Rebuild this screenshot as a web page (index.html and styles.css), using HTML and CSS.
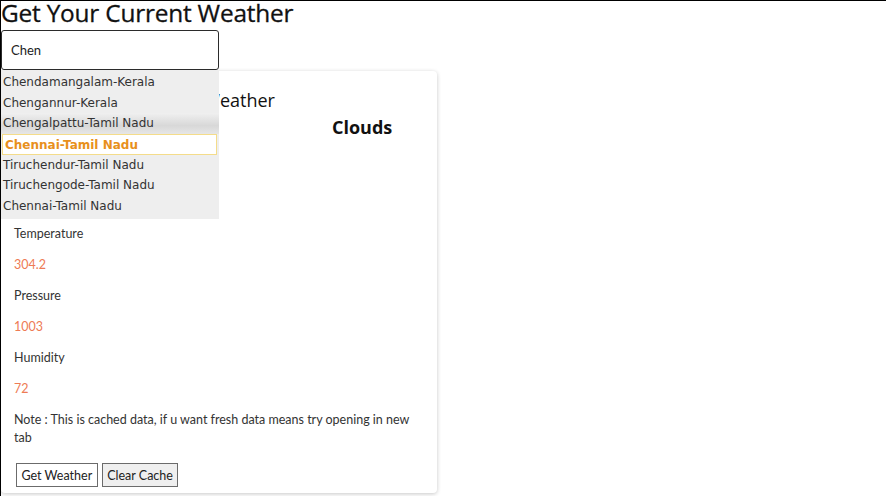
FILE: index.html
```html
<!DOCTYPE html>
<html>
<head>
<meta charset="utf-8">
<link rel="stylesheet" href="styles.css">
</head>
<body>
<div class="page">
  <h1 class="title">Get Your Current Weather</h1>
  <div class="search">
    <input class="search-input" type="text" value="Chen">
    <ul class="suggest">
      <li class="item">Chendamangalam-Kerala</li>
      <li class="item">Chengannur-Kerala</li>
      <li class="item item-hover">Chengalpattu-Tamil Nadu</li>
      <li class="item item-active">Chennai-Tamil Nadu</li>
      <li class="item">Tiruchendur-Tamil Nadu</li>
      <li class="item">Tiruchengode-Tamil Nadu</li>
      <li class="item">Chennai-Tamil Nadu</li>
    </ul>
  </div>
  <div class="card">
    <h2 class="card-title">Current Weather</h2>
    <div class="cond">Clouds</div>
    <div class="icon-space"></div>
    <p class="label">Temperature</p>
    <p class="value">304.2</p>
    <p class="label">Pressure</p>
    <p class="value">1003</p>
    <p class="label">Humidity</p>
    <p class="value">72</p>
    <p class="label">Note : This is cached data, if u want fresh data means try opening in new tab</p>
    <div class="actions">
      <button class="btn btn-light">Get Weather</button>
      <button class="btn btn-gray">Clear Cache</button>
    </div>
  </div>
</div>
</body>
</html>
```
FILE: styles.css
```css
html, body {
  margin: 0;
  padding: 0;
  background: #fff;
}
.page {
  box-sizing: border-box;
  height: 496px;
  border-top: 1px solid #000;
  border-left: 1px solid #000;
  font-family: Lato, "Open Sans", sans-serif;
  color: #222;
  position: relative;
}
.title {
  margin: 0 0 5px 0;
  font-family: "Open Sans", sans-serif;
  font-weight: 400;
  font-size: 24.4px;
  line-height: 24px;
  color: #111;
  letter-spacing: -0.2px;
  -webkit-text-stroke: 0.3px #111;
}
.search {
  position: relative;
  width: 218px;
  z-index: 2;
}
.search-input {
  display: block;
  box-sizing: border-box;
  width: 218px;
  height: 40px;
  margin: 0;
  border: 1.5px solid #2b2b2b;
  border-radius: 3px;
  padding: 0 9px;
  font-family: Lato, sans-serif;
  font-size: 13px;
  color: #222;
  outline: none;
}
.suggest {
  position: absolute;
  top: 40px;
  left: 0;
  width: 218px;
  margin: 0;
  padding: 2px 0 2px 0;
  list-style: none;
  background: #eeeeee;
  box-sizing: border-box;
}
.item {
  font-family: "DejaVu Sans", Verdana, sans-serif;
  font-size: 12px;
  height: 20.6px;
  line-height: 20px;
  padding-left: 2px;
  color: #333;
  white-space: nowrap;
}
.item-hover {
  background: linear-gradient(#f0f0f0, #d8d8d8 60%, #e6e6e6);
}
.item-active {
  background: #fff;
  border: 1px solid #f4dc8a;
  box-sizing: border-box;
  color: #e8901c;
  font-weight: bold;
  margin: 0 2px 0 1px;
  padding-left: 2px;
  height: 21px;
}
.card {
  box-sizing: border-box;
  width: 436px;
  height: 422px;
  margin-top: 1px;
  border-radius: 4px;
  background: #fff;
  box-shadow: 0 1px 4px rgba(0, 0, 0, 0.22);
  padding: 0 14px 0 13px;
}
.card-title {
  margin: 0;
  padding-top: 18px;
  padding-left: 120px;
  font-family: "Open Sans", sans-serif;
  font-weight: 400;
  font-size: 18px;
  line-height: 22px;
  color: #111;
}
.cond {
  margin: 5px 0 0 318px;
  font-family: "Open Sans", sans-serif;
  font-weight: 700;
  font-size: 18px;
  line-height: 22px;
  color: #111;
}
.icon-space {
  height: 87px;
}
.label, .value {
  margin: 0 0 13px 0;
  font-size: 12.5px;
  line-height: 18px;
}
.label { color: #333; }
.value { color: #ee7b55; }
.actions {
  display: flex;
  gap: 4px;
  padding-left: 2px;
  margin-top: 16px;
}
.btn {
  box-sizing: border-box;
  height: 24px;
  padding: 0 4.5px;
  border: 1px solid #6b6b6b;
  border-radius: 0;
  font-family: Lato, sans-serif;
  font-size: 12.5px;
  color: #222;
}
.btn-light { background: #fff; }
.btn-gray { background: #efefef; }
```
